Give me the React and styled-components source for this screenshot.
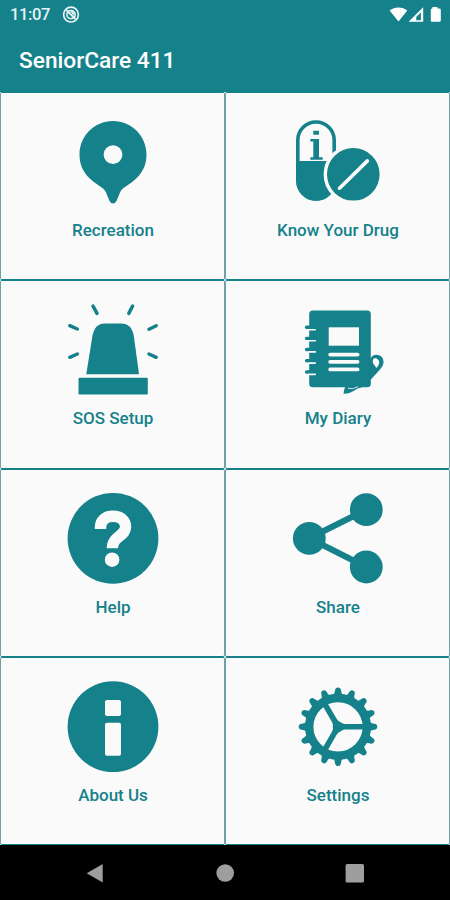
import styled, { createGlobalStyle } from "styled-components";

const teal = "#15818a";
const paper = "#fafafa";

export default function App() {
	return (
		<>
			<GlobalStyle />
			<Screen>
				<StatusBar>
					<Time>11:07</Time>
					<NoSyncIcon />
					<StatusIcons />
				</StatusBar>

				<Header>
					<Title>SeniorCare 411</Title>
				</Header>

				<Menu>
					{items.map(({ label, Icon }) => (
						<Tile key={label}>
							<TileIcon viewBox="0 0 100 100">
								<Icon />
							</TileIcon>
							<Label>{label}</Label>
						</Tile>
					))}
				</Menu>

				<NavBar>
					<NavIcon viewBox="0 0 20 20">
						<path d="M1.7 10.2L17.7 0.9V19.5Z" />
					</NavIcon>
					<NavIcon viewBox="0 0 20 20">
						<circle cx="10.2" cy="10" r="8.8" />
					</NavIcon>
					<NavIcon viewBox="0 0 20 20">
						<rect x="0.6" y="0.9" width="18.4" height="18.6" rx="1.5" />
					</NavIcon>
				</NavBar>
			</Screen>
		</>
	);
}

function NoSyncIcon() {
	return (
		<svg width="18" height="18" viewBox="0 0 18 18" fill="none" stroke="#e6f2f3">
			<circle cx="9" cy="8.6" r="7.4" strokeWidth="1.7" />
			<circle cx="9" cy="8.6" r="4.1" strokeWidth="1.6" />
			<path d="M4.5 4.2L13.5 13" strokeWidth="1.9" />
			<path d="M8 5.2L12 9.4V5.2Z" fill="#e6f2f3" stroke="none" />
		</svg>
	);
}

function StatusIcons() {
	return (
		<StatusGlyphs viewBox="0 0 54 18" fill="#fff">
			<path d="M0.6 4.6C5.5 0.6 13.5 0.6 18.3 4.6L9.5 15.6Z" />
			<path d="M19.6 15.8L34.2 1.2V15.8ZM27.2 10.9V14.2H31.9V6.2Z" fillRule="evenodd" />
			<path d="M43.4 1H48.4V2.4H50.6Q51.8 2.4 51.8 3.7V14.7Q51.8 15.8 50.7 15.8H42.9Q41.8 15.8 41.8 14.7V3.7Q41.8 2.4 43.4 2.4Z" />
		</StatusGlyphs>
	);
}

function PinIcon() {
	return (
		<path
			fillRule="evenodd"
			d="M50 9C31.4 9 16.5 24 16.5 42.5C16.5 54.5 21.5 62 29 68.5C35 73.7 40.5 75 43 80.5L46.3 88.5Q47.5 91.4 50 91.4Q52.5 91.4 53.7 88.5L57 80.5C59.5 75 65 73.7 71 68.5C78.5 62 83.5 54.5 83.5 42.5C83.5 24 68.6 9 50 9ZM50 33.2A9.4 9.4 0 1 1 50 52A9.4 9.4 0 1 1 50 33.2Z"
		/>
	);
}

function PillsIcon() {
	return (
		<>
			<rect x="9.8" y="10" width="36.4" height="77" rx="18.2" fill={paper} stroke={teal} strokeWidth="3.6" />
			<path d="M8.5 48.9H47.8V69A19.6 19.6 0 0 1 8.5 69Z" />
			<path d="M25.3 18.8H31V22.7H25.3ZM22.3 27H31V45.2H34.7V47.8H22.3V45.2H25.3V29.5H22.3Z" />
			<circle cx="65.3" cy="62.3" r="28" stroke={paper} strokeWidth="3.4" />
			<path d="M51.5 76.2L79.4 48.9" stroke={paper} strokeWidth="3.6" strokeLinecap="round" />
		</>
	);
}

function SirenIcon() {
	return (
		<>
			<path d="M23.3 74.3L29.2 37.2C30.8 27.8 34.5 23.4 42 23.4H58C65.5 23.4 69.7 27.8 71 37.2L76 74.3Z" />
			<rect x="15.5" y="77.8" width="69.3" height="16.6" rx="1" />
			<path
				d="M6.8 25.7L14.3 29M6.8 57.3L14.3 54M30 6L34 13.4M69.6 6L65.8 13.4M93.2 25.7L86 29.2M93.2 57.3L86 54"
				stroke={teal}
				strokeWidth="3.5"
				strokeLinecap="round"
			/>
		</>
	);
}

function DiaryIcon() {
	const rings = [27.3, 38.4, 49.5, 60.7, 72];

	return (
		<>
			<rect x="21.2" y="10.5" width="61.6" height="76.8" rx="3.6" />
			<path d="M82.5 59Q84 54.8 88.6 54.8Q96 55.8 95.6 62.5Q95.2 66.5 92 69.5L82 80.5Q77 87 69.5 88.5Q62 94 55.6 93.8Q56 87 60 82L77 66Z" />
			<path d="M85.2 63.5C83.8 59.4 86.2 57.4 89 58.8C92 60.5 92 64.5 88.4 68Z" fill={paper} />
			<path d="M60 88.2Q64.5 90 70 86.6" fill="none" stroke={paper} strokeWidth="0.8" />
			<path d="M40.7 27.3H71V45.7H40.7Z" fill={paper} />
			<path d="M42.2 54.6H69.6M42.2 61.8H69.6M42.2 69.4H69.6" stroke={paper} strokeWidth="3.8" strokeLinecap="round" />
			{rings.map((y) => (
				<g key={y} fill="none" strokeLinecap="round">
					<path d={`M18.6 ${y}H22`} stroke={teal} strokeWidth="3.4" />
					<path d={`M20.6 ${y + 2.4}H27.3`} stroke={paper} strokeWidth="1.6" />
				</g>
			))}
		</>
	);
}

function HelpIcon() {
	return (
		<>
			<circle cx="50" cy="49.3" r="45.4" />
			<path
				d="M37.5 40V38.5C37.5 31.5 42.5 27.2 49.8 27.2C57.5 27.2 62.6 31.4 62.6 37.8C62.6 47.4 49.4 47 49.4 59.3"
				fill="none"
				stroke={paper}
				strokeWidth="11.4"
			/>
			<circle cx="49.1" cy="70.7" r="7.3" fill={paper} />
		</>
	);
}

function ShareIcon() {
	return (
		<>
			<path d="M78.3 20.7L21.3 49.3L78.3 78" fill="none" stroke={teal} strokeWidth="6.2" />
			<circle cx="21.3" cy="49.3" r="16.4" />
			<circle cx="78.3" cy="20.7" r="16.4" />
			<circle cx="78.3" cy="78" r="16.4" />
		</>
	);
}

function InfoIcon() {
	return (
		<>
			<circle cx="50" cy="49.7" r="45.4" />
			<rect x="42" y="23" width="16" height="16" rx="2" fill={paper} />
			<rect x="42" y="45.8" width="16" height="33" rx="2" fill={paper} />
		</>
	);
}

function GearIcon() {
	const teeth = Array.from({ length: 16 }, (_, i) => i * 22.5);

	return (
		<g transform="translate(50 49.8)">
			{teeth.map((angle) => (
				<path
					key={angle}
					d="M-6 -31Q-3.2 -32.5 -3 -36.2Q-2.7 -39.3 0 -39.3Q2.7 -39.3 3 -36.2Q3.2 -32.5 6 -31Z"
					transform={`rotate(${angle})`}
				/>
			))}
			<circle r="28.8" fill="none" stroke={teal} strokeWidth="8.4" />
			{[0, 120, 240].map((angle) => (
				<path
					key={angle}
					d="M0 -5.8Q3 -2.8 7 -2.8H26V2.8H7Q3 2.8 0 5.8Z"
					transform={`rotate(${angle})`}
				/>
			))}
			<circle r="5.3" />
		</g>
	);
}

const items = [
	{ label: "Recreation", Icon: PinIcon },
	{ label: "Know Your Drug", Icon: PillsIcon },
	{ label: "SOS Setup", Icon: SirenIcon },
	{ label: "My Diary", Icon: DiaryIcon },
	{ label: "Help", Icon: HelpIcon },
	{ label: "Share", Icon: ShareIcon },
	{ label: "About Us", Icon: InfoIcon },
	{ label: "Settings", Icon: GearIcon },
];

const GlobalStyle = createGlobalStyle`
	* {
		box-sizing: border-box;
	}

	body {
		margin: 0;
		font-family: Roboto, "Liberation Sans", sans-serif;
	}
`;

const Screen = styled.div`
	display: flex;
	flex-direction: column;
	width: 450px;
	height: 900px;
	overflow: hidden;
	background-color: ${teal};
`;

const StatusBar = styled.div`
	display: flex;
	align-items: center;
	gap: 12px;
	height: 30px;
	padding: 0 7px 0 10px;
	color: #e6f2f3;
`;

const Time = styled.span`
	width: 40px;
	font-size: 16.5px;
	font-weight: 500;
	line-height: 30px;
	letter-spacing: -0.4px;
`;

const StatusGlyphs = styled.svg`
	width: 54px;
	height: 18px;
	margin-left: auto;
`;

const Header = styled.header`
	display: flex;
	align-items: center;
	height: 62px;
	padding: 0 19px;
`;

const Title = styled.h1`
	margin: 0;
	font-size: 22.7px;
	font-weight: 500;
	line-height: 62px;
	color: #fff;
`;

const Menu = styled.main`
	display: grid;
	grid-template-columns: 1fr 1fr;
	grid-template-rows: repeat(4, 1fr);
	height: 753px;
	background-color: #fff;
`;

const Tile = styled.div`
	display: flex;
	flex-direction: column;
	align-items: center;
	padding: 19px 0 0 1px;
	border: 1px solid ${teal};
	border-left-color: #6f9fa8;
	border-right-color: #6f9fa8;
	border-radius: 2px;
	background-color: ${paper};
`;

const TileIcon = styled.svg`
	width: 100px;
	height: 100px;
	fill: ${teal};
`;

const Label = styled.span`
	margin-top: 7px;
	font-size: 17px;
	font-weight: 500;
	line-height: 22px;
	color: ${teal};
`;

const NavBar = styled.nav`
	display: flex;
	justify-content: center;
	align-items: center;
	gap: 110px;
	height: 55px;
	padding-top: 1px;
	background-color: #000;
`;

const NavIcon = styled.svg`
	width: 20px;
	height: 20px;
	fill: #9e9e9e;
`;
